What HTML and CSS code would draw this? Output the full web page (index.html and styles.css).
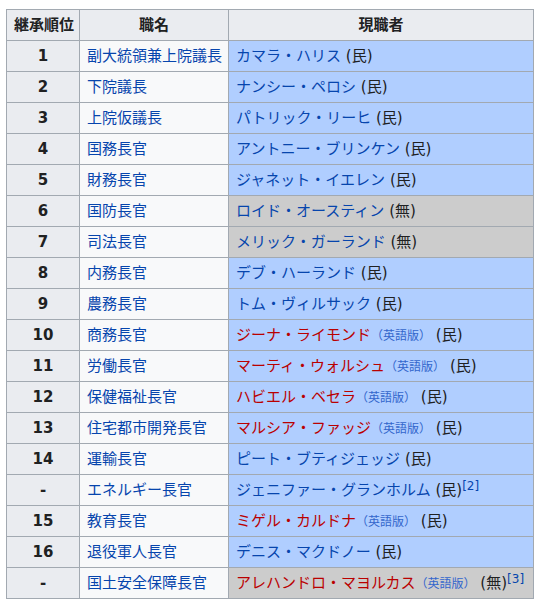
FILE: index.html
```html
<!DOCTYPE html>
<html lang="ja">
<head>
<meta charset="utf-8">
<link rel="stylesheet" href="styles.css">
</head>
<body>
<table class="wikitable">
  <thead>
    <tr><th class="c1">継承順位</th><th class="c2">職名</th><th class="c3">現職者</th></tr>
  </thead>
  <tbody>
    <tr><th>1</th><td><a>副大統領兼上院議長</a></td><td class="dem"><a>カマラ・ハリス</a> (民)</td></tr>
    <tr><th>2</th><td><a>下院議長</a></td><td class="dem"><a>ナンシー・ペロシ</a> (民)</td></tr>
    <tr><th>3</th><td><a>上院仮議長</a></td><td class="dem"><a>パトリック・リーヒ</a> (民)</td></tr>
    <tr><th>4</th><td><a>国務長官</a></td><td class="dem"><a>アントニー・ブリンケン</a> (民)</td></tr>
    <tr><th>5</th><td><a>財務長官</a></td><td class="dem"><a>ジャネット・イエレン</a> (民)</td></tr>
    <tr><th>6</th><td><a>国防長官</a></td><td class="ind"><a>ロイド・オースティン</a> (無)</td></tr>
    <tr><th>7</th><td><a>司法長官</a></td><td class="ind"><a>メリック・ガーランド</a> (無)</td></tr>
    <tr><th>8</th><td><a>内務長官</a></td><td class="dem"><a>デブ・ハーランド</a> (民)</td></tr>
    <tr><th>9</th><td><a>農務長官</a></td><td class="dem"><a>トム・ヴィルサック</a> (民)</td></tr>
    <tr><th>10</th><td><a>商務長官</a></td><td class="dem"><a class="new">ジーナ・ライモンド</a><span class="il">（英語版）</span> (民)</td></tr>
    <tr><th>11</th><td><a>労働長官</a></td><td class="dem"><a class="new">マーティ・ウォルシュ</a><span class="il">（英語版）</span> (民)</td></tr>
    <tr><th>12</th><td><a>保健福祉長官</a></td><td class="dem"><a class="new">ハビエル・ベセラ</a><span class="il">（英語版）</span> (民)</td></tr>
    <tr><th>13</th><td><a>住宅都市開発長官</a></td><td class="dem"><a class="new">マルシア・ファッジ</a><span class="il">（英語版）</span> (民)</td></tr>
    <tr><th>14</th><td><a>運輸長官</a></td><td class="dem"><a>ピート・ブティジェッジ</a> (民)</td></tr>
    <tr><th>-</th><td><a>エネルギー長官</a></td><td class="dem"><a>ジェニファー・グランホルム</a> (民)<sup class="ref"><a>[2]</a></sup></td></tr>
    <tr><th>15</th><td><a>教育長官</a></td><td class="dem"><a class="new">ミゲル・カルドナ</a><span class="il">（英語版）</span> (民)</td></tr>
    <tr><th>16</th><td><a>退役軍人長官</a></td><td class="dem"><a>デニス・マクドノー</a> (民)</td></tr>
    <tr><th>-</th><td><a>国土安全保障長官</a></td><td class="ind"><a class="new">アレハンドロ・マヨルカス</a><span class="il">（英語版）</span> (無)<sup class="ref"><a>[3]</a></sup></td></tr>
  </tbody>
</table>
</body>
</html>
```
FILE: styles.css
```css
html, body {
  margin: 0;
  padding: 0;
  background: #ffffff;
}
body {
  padding: 9px 0 0 6px;
  font-family: "DejaVu Sans", "Noto Sans CJK JP", sans-serif;
  font-size: 15px;
  color: #202122;
}
.wikitable {
  border-collapse: collapse;
  border: 1px solid #a2a9b1;
  background: #f8f9fa;
  width: 528px;
  table-layout: fixed;
}
.wikitable th,
.wikitable td {
  border: 1px solid #a2a9b1;
  padding: 3px 7px;
  line-height: 24px;
  height: 24px;
  white-space: nowrap;
  overflow: hidden;
}
.wikitable th {
  background: #eaecf0;
  font-weight: bold;
  text-align: center;
}
.wikitable td {
  text-align: left;
}
.c1 { width: 58px; }
.c2 { width: 134px; }
.c3 { width: auto; }
.dem { background: #b0ceff; }
.ind { background: #cccccc; }
a {
  color: #0645ad;
  text-decoration: none;
}
a.new {
  color: #ba0000;
}
.il {
  color: #3366cc;
  font-size: 12px;
  line-height: 1;
}
.ref {
  font-size: 12px;
  line-height: 0;
  vertical-align: 5px;
}
```
